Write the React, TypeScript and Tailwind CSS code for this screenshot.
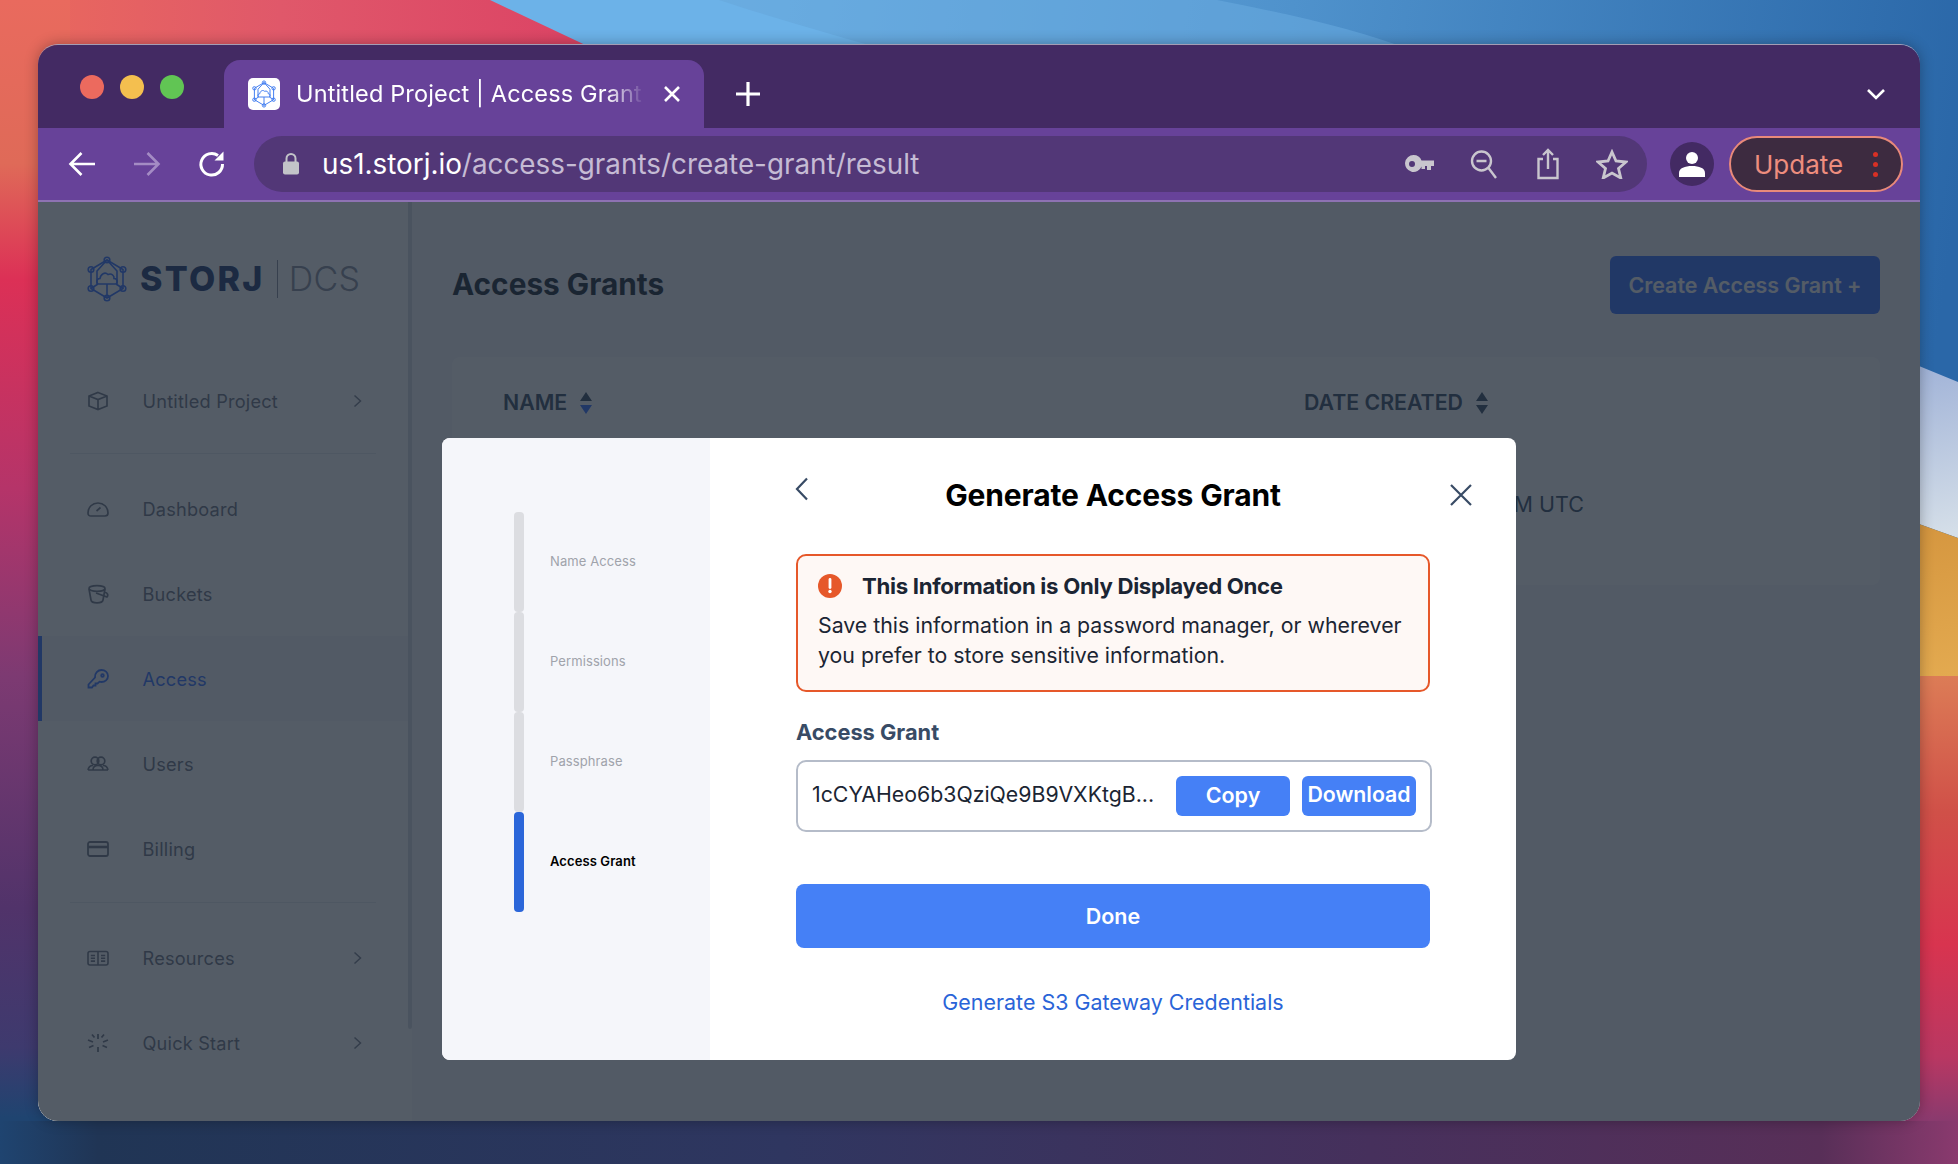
import React from "react";

function Wallpaper() {
  return (
    <svg className="absolute inset-0" width="1958" height="1164" viewBox="0 0 1958 1164">
      <defs>
        <linearGradient id="blue" gradientUnits="userSpaceOnUse" x1="600" y1="0" x2="1958" y2="200">
          <stop offset="0" stopColor="#6FB3E6" />
          <stop offset="0.5" stopColor="#4F92CC" />
          <stop offset="1" stopColor="#2A67A8" />
        </linearGradient>
        <linearGradient id="top" gradientUnits="userSpaceOnUse" x1="0" y1="0" x2="560" y2="0">
          <stop offset="0" stopColor="#EA6A5C" />
          <stop offset="0.5" stopColor="#E0586A" />
          <stop offset="1" stopColor="#DC4565" />
        </linearGradient>
        <linearGradient id="left" gradientUnits="userSpaceOnUse" x1="0" y1="0" x2="0" y2="1164">
          <stop offset="0" stopColor="#E96A5E" />
          <stop offset="0.14" stopColor="#DF6A58" />
          <stop offset="0.24" stopColor="#DC3056" />
          <stop offset="0.42" stopColor="#B53469" />
          <stop offset="0.58" stopColor="#7D3A72" />
          <stop offset="0.78" stopColor="#51336A" />
          <stop offset="0.9" stopColor="#3E3A6E" />
          <stop offset="0.96" stopColor="#1F4470" />
          <stop offset="1" stopColor="#1F4470" />
        </linearGradient>
        <linearGradient id="bottom" gradientUnits="userSpaceOnUse" x1="0" y1="0" x2="1958" y2="0">
          <stop offset="0" stopColor="#1F4470" />
          <stop offset="0.05" stopColor="#203555" />
          <stop offset="0.4" stopColor="#2F3660" />
          <stop offset="0.7" stopColor="#46305C" />
          <stop offset="0.93" stopColor="#582F58" />
          <stop offset="1" stopColor="#8A3A6E" />
        </linearGradient>
        <linearGradient id="white" gradientUnits="userSpaceOnUse" x1="1920" y1="370" x2="1958" y2="530">
          <stop offset="0" stopColor="#A2B4D8" />
          <stop offset="1" stopColor="#D4DEE8" />
        </linearGradient>
        <linearGradient id="orange" gradientUnits="userSpaceOnUse" x1="1920" y1="525" x2="1958" y2="676">
          <stop offset="0" stopColor="#D5963F" />
          <stop offset="1" stopColor="#E3AA50" />
        </linearGradient>
        <linearGradient id="red" gradientUnits="userSpaceOnUse" x1="0" y1="676" x2="0" y2="1164">
          <stop offset="0" stopColor="#DC7C56" />
          <stop offset="0.28" stopColor="#D05048" />
          <stop offset="0.55" stopColor="#D8344F" />
          <stop offset="0.78" stopColor="#B93762" />
          <stop offset="0.91" stopColor="#8A3A6E" />
          <stop offset="1" stopColor="#823A6E" />
        </linearGradient>
      </defs>
      <rect width="1958" height="1164" fill="url(#blue)" />
      <path d="M490 0H1217C1290 14 1360 30 1411 50H590Z" fill="#69ACE0" opacity="0.55" />
      <path d="M490 0H719C780 20 830 34 887 50H590Z" fill="#6CB2E8" />
      <path d="M0 0H490L596 50H0Z" fill="url(#top)" />
      <rect x="0" y="0" width="70" height="1164" fill="url(#left)" />
      <path d="M1880 350L1958 382V538L1880 510Z" fill="url(#white)" />
      <path d="M1880 510L1958 538V676H1880Z" fill="url(#orange)" />
      <rect x="1880" y="676" width="78" height="488" fill="url(#red)" />
      <rect x="0" y="1121" width="1958" height="43" fill="url(#bottom)" />
    </svg>
  );
}

function StorjMark({ className, stroke }: { className?: string; stroke: string }) {
  const nodes = [
    [20, 4],
    [36, 13.5],
    [36, 32.5],
    [20, 42],
    [4, 32.5],
    [4, 13.5],
  ];
  return (
    <svg className={className} viewBox="0 0 40 46" fill="none" stroke={stroke} strokeWidth="1.600">
      <path d="M20 4L36 13.500V32.500L20 42L4 32.500V13.500Z" />
      <path d="M20 4L10 15V29M20 4L30 15V29M4 32.500L11 28M36 32.500L29 28M20 28V42" />
      <path d="M12 28C9 28 9 22.500 13 22.500C13.500 18 18 15.500 21 18.500C24.500 17 27.500 19.500 27 22.500C31 22.500 31 28 28 28Z" />
      {nodes.map(([x, y]) => (
        <circle key={x * 100 + y} cx={x} cy={y} r="2.800" fill="none" />
      ))}
    </svg>
  );
}

const I = "w-[22px] h-[20px] fill-none stroke-[#6F7685] shrink-0";

const icons: Record<string, React.ReactNode> = {
  cube: (
    <svg className={I} viewBox="0 0 22 20" strokeWidth="1.700">
      <path d="M11 1.500L20 5V15L11 18.500L2 15V5ZM2 5L11 8.500L20 5M11 8.500V18.500" />
    </svg>
  ),
  gauge: (
    <svg className={I} viewBox="0 0 22 20" strokeWidth="1.700">
      <path d="M1 14C1 8 5.500 4 11 4C16.500 4 21 8 21 14C21 16 20 17 18 17H4C2 17 1 16 1 14Z" />
      <path d="M9.500 12L13.500 8.500" />
    </svg>
  ),
  bucket: (
    <svg className={I} viewBox="0 0 22 20" strokeWidth="1.700">
      <ellipse cx="10" cy="4.500" rx="8" ry="2.800" />
      <path d="M2 5L4 16C4.300 18 6 18.800 10 18.800C14 18.800 15.700 18 16 16L18 5" />
      <path d="M9 9L20 13C21.500 11.500 20.500 8.500 18 8.500" />
    </svg>
  ),
  key: (
    <svg className="w-[22px] h-[22px] fill-none stroke-[#376FFF] shrink-0" viewBox="0 0 22 22" strokeWidth="1.800">
      <path d="M8 9.500C7.500 5 11 2 14.500 2C18 2 21 4.500 21 8C21 11.500 18 14 14.500 14C13.800 14 13 13.900 12.500 13.700L10.500 15.500H8.500V17.500H6.500L5 19.500H1.500V16.500L8 9.500Z" />
      <circle cx="15.500" cy="7.500" r="1.300" />
    </svg>
  ),
  users: (
    <svg className={I} viewBox="0 0 22 20" strokeWidth="1.700">
      <circle cx="8" cy="7" r="3.800" />
      <circle cx="14" cy="7" r="3.800" />
      <path d="M1 16C1.500 13 4 11.500 6 11.500M21 16C20.500 13 18 11.500 16 11.500M6 16H16C16 13 14 11.500 11 11.500C8 11.500 6 13 6 16ZM1 16H6M16 16H21" />
    </svg>
  ),
  card: (
    <svg className={I} viewBox="0 0 22 20" strokeWidth="1.800">
      <rect x="1" y="3" width="20" height="14" rx="2" />
      <path d="M1 8H21" strokeWidth="2.600" />
    </svg>
  ),
  book: (
    <svg className={I} viewBox="0 0 22 20" strokeWidth="1.600">
      <rect x="1" y="3.500" width="20" height="13.500" rx="2" />
      <path d="M11 3.500V17M3.800 7.500H8M3.800 10.300H8M3.800 13.100H8M14 7.500H18.200M14 10.300H18.200M14 13.100H18.200" />
    </svg>
  ),
  spark: (
    <svg className={I} viewBox="0 0 22 20" strokeWidth="1.800">
      <path d="M11 1V6M11 14V19M1 7L6 9M21 7L16 9M2 14.500L6.500 12.500M20 14.500L15.500 12.500M5 1.500L7.500 4.500M17 1.500L14.500 4.500" />
    </svg>
  ),
};

function Row({ icon, label, chevron, active }: { icon: string; label: string; chevron?: boolean; active?: boolean }) {
  return (
    <div className={"h-[85px] flex items-center pr-[46px] " + (active ? "bg-[#F5F6FA] border-l-4 border-[#376FFF] pl-[45px]" : "pl-[49px]")}>
      <div className="w-[55.500px] shrink-0">{icons[icon]}</div>
      <span className={"flex-1 pt-[2px] text-[18.200px] tracking-[0.2px] " + (active ? "text-[#376FFF]" : "text-[#6F7685]")}>{label}</span>
      {chevron && (
        <svg className="w-[9px] h-[14px] fill-none stroke-[#7C8290]" viewBox="0 0 9 14" strokeWidth="1.500">
          <path d="M1.500 1.500L7.500 7L1.500 12.500" />
        </svg>
      )}
    </div>
  );
}

function SortArrows({ low }: { low?: boolean }) {
  return (
    <svg className="w-[14px] h-[24px]" viewBox="0 0 14 24">
      <path d="M7 1L13 10H1Z" fill="#384B65" />
      <path d="M7 23L13 14H1Z" fill={low ? "#376FFF" : "#384B65"} />
    </svg>
  );
}

function Step({ label, active }: { label: string; active?: boolean }) {
  return (
    <div className="h-[100px] flex items-center">
      <div className={"w-[10px] h-full rounded-[4px] " + (active ? "bg-[#2B66D9]" : "bg-[#DCDDE1]")} />
      <span className={"ml-[26px] text-[13px] tracking-[0.1px] -mt-[1px] " + (active ? "text-black font-semibold" : "text-[#A0A3AB]")}>{label}</span>
    </div>
  );
}

export default function App() {
  return (
    <div className="relative w-[1958px] h-[1164px] overflow-hidden pl-[38px] pt-[44px] font-['Inter',sans-serif]">
      <Wallpaper />
      <div className="relative w-[1882px] h-[1077px] rounded-[20px] overflow-hidden border-t border-[#A49DB4] shadow-[0_0_14px_rgba(0,0,0,0.3)] flex flex-col">
        {/* tab strip */}
        <div className="h-[83px] bg-[#432A63] flex items-end shrink-0">
          <div className="flex gap-[16px] ml-[42px] mb-[29px] w-[144px]">
            <span className="w-[24px] h-[24px] rounded-full bg-[#EC6A5E]" />
            <span className="w-[24px] h-[24px] rounded-full bg-[#F4BF4F]" />
            <span className="w-[24px] h-[24px] rounded-full bg-[#61C554]" />
          </div>
          <div className="h-[68px] w-[480px] rounded-t-[16px] bg-[#674299] flex items-center pl-[24px] shrink-0">
            <div className="w-[32px] h-[32px] rounded-[5px] bg-white flex items-center justify-center shrink-0">
              <StorjMark className="w-[24px] h-[28px]" stroke="#3F7BF0" />
            </div>
            <div className="w-[352px] ml-[16px] text-[23.500px] tracking-[0.15px] text-white whitespace-nowrap [mask-image:linear-gradient(to_right,black_88%,transparent_99%)]">
              Untitled Project | Access Grant
            </div>
            <svg className="w-[18px] h-[18px] ml-[15px] stroke-white fill-none" viewBox="0 0 18 18" strokeWidth="2.600">
              <path d="M2 2L16 16M16 2L2 16" />
            </svg>
          </div>
          <svg className="w-[26px] h-[26px] ml-[31px] mb-[21px] stroke-white fill-none" viewBox="0 0 26 26" strokeWidth="3.200">
            <path d="M13 1V25M1 13H25" />
          </svg>
          <div className="flex-1" />
          <svg className="w-[20px] h-[12px] mr-[34px] mb-[28px] stroke-white fill-none" viewBox="0 0 20 12" strokeWidth="2.600">
            <path d="M2 2L10 10L18 2" />
          </svg>
        </div>
        {/* toolbar */}
        <div className="h-[74px] bg-[#674299] border-b-2 border-[#8E72B3] flex items-start shrink-0 pt-[8px]">
          <div className="flex items-center h-[56px] pl-[30px] gap-[37px] w-[216px]">
            <svg className="w-[28px] h-[26px] stroke-white fill-none shrink-0" viewBox="0 0 28 26" strokeWidth="2.600">
              <path d="M27 13H3M13.500 2L2.500 13L13.500 24" />
            </svg>
            <svg className="w-[28px] h-[26px] stroke-[#A48CC4] fill-none shrink-0" viewBox="0 0 28 26" strokeWidth="2.600">
              <path d="M1 13H25M14.500 2L25.500 13L14.500 24" />
            </svg>
            <svg className="w-[28px] h-[28px] stroke-white fill-none shrink-0" viewBox="0 0 28 28" strokeWidth="3">
              <path d="M24.500 14A10.800 10.800 0 1 1 20 5.500" />
              <path d="M25.500 1.500V10.500H16.500Z" fill="white" stroke="none" />
            </svg>
          </div>
          <div className="w-[1393px] h-[56px] rounded-full bg-[#523777] flex items-center pl-[28px] shrink-0">
            <svg className="w-[18px] h-[24px] shrink-0" viewBox="0 0 18 24">
              <path d="M4.500 10V6.500A4.500 4.500 0 0 1 13.500 6.500V10" fill="none" stroke="#C2C3C8" strokeWidth="2" />
              <rect x="1" y="9.500" width="16" height="13" rx="2" fill="#C2C3C8" />
            </svg>
            <div className="ml-[22px] mt-[2px] w-[1000px] text-[27.850px] whitespace-nowrap text-white">
              us1.storj.io<span className="text-[#C5BBD4]">/access-grants/create-grant/result</span>
            </div>
            <div className="flex items-center ml-[83px]">
              <svg className="w-[30px] h-[20px] shrink-0" viewBox="0 0 30 20" fill="#C9C6CE">
                <path fillRule="evenodd" d="M8.500 1A8.500 8.500 0 0 1 16.500 6.500H29V12H26V16H22V12H20V15H16.500V12.500A8.500 8.500 0 1 1 8.500 1ZM7 7A3 3 0 1 0 7 13A3 3 0 1 0 7 7Z" />
              </svg>
              <svg className="w-[28px] h-[30px] ml-[35px] fill-none stroke-[#C9C6CE] shrink-0" viewBox="0 0 28 30" strokeWidth="2.400">
                <circle cx="11.500" cy="12" r="9.500" />
                <path d="M6.500 12H16.500M18.500 19L26 29" />
              </svg>
              <svg className="w-[24px] h-[32px] ml-[38px] fill-none stroke-[#C9C6CE] shrink-0" viewBox="0 0 24 32" strokeWidth="2.400">
                <path d="M7 11H2.500V30H21.500V11H17M12 21V2M7 7L12 2L17 7" />
              </svg>
              <svg className="w-[32px] h-[30px] ml-[36px] fill-none stroke-[#C9C6CE] shrink-0" viewBox="0 0 32 30" strokeWidth="2.800">
                <path d="M16 3L20 12L30 13L22.500 19.500L24.800 29L16 24L7.200 29L9.500 19.500L2 13L12 12Z" />
              </svg>
            </div>
          </div>
          <div className="w-[44px] h-[44px] rounded-full bg-[#432A63] ml-[23px] mt-[6px] flex items-center justify-center shrink-0">
            <svg className="w-[26px] h-[26px]" viewBox="0 0 26 26" fill="white">
              <circle cx="13" cy="7" r="6" />
              <path d="M0 26V22C0 17 6 15 13 15C20 15 26 17 26 22V26Z" />
            </svg>
          </div>
          <div className="w-[174px] h-[56px] rounded-full bg-[#3D2B40] border-2 border-[#E9897A] ml-[15px] flex items-center pl-[23px] shrink-0">
            <span className="text-[26px] text-[#EE8D7E] w-[119px]">Update</span>
            <span className="flex flex-col gap-[5px]">
              <span className="w-[5px] h-[5px] rounded-full bg-[#D93025]" />
              <span className="w-[5px] h-[5px] rounded-full bg-[#D93025]" />
              <span className="w-[5px] h-[5px] rounded-full bg-[#D93025]" />
            </span>
          </div>
        </div>
        {/* page */}
        <div className="relative flex-1 flex bg-[#F5F6FA] min-h-0">
          <div className="w-[374px] shrink-0 bg-white flex">
            <div className="flex-1 flex flex-col pt-[54px]">
              <div className="flex items-center h-[46px] pl-[49px]">
                <StorjMark className="w-[40px] h-[46px]" stroke="#376FFF" />
                <span className="ml-[13px] text-[34px] font-extrabold tracking-[2.300px] text-[#203870] leading-none">STORJ</span>
                <span className="w-px h-[38px] bg-[#8A90A0] ml-[12px]" />
                <span className="ml-[11px] text-[34px] font-light tracking-[0.3px] text-[#8A90A0] leading-none">DCS</span>
              </div>
              <div className="mt-[56px]">
                <Row icon="cube" label="Untitled Project" chevron />
              </div>
              <div className="h-px bg-[#E8EAEE] mx-[32px] mt-[10px] mb-[12px]" />
              <Row icon="gauge" label="Dashboard" />
              <Row icon="bucket" label="Buckets" />
              <Row icon="key" label="Access" active />
              <Row icon="users" label="Users" />
              <Row icon="card" label="Billing" />
              <div className="h-px bg-[#E8EAEE] mx-[32px] mt-[11px] mb-[12px]" />
              <Row icon="book" label="Resources" chevron />
              <Row icon="spark" label="Quick Start" chevron />
            </div>
            <div className="w-[4px] h-[827px] bg-[#D8DCE2] rounded-b-[2px] shrink-0" />
          </div>
          <div className="flex-1 px-[40px] pt-[54px]">
            <div className="flex items-center justify-between h-[58px]">
              <h1 className="text-[29.800px] font-bold text-[#1B2533] -mt-[2px]">Access Grants</h1>
              <div className="w-[270px] h-[58px] rounded-[6px] bg-[#376FFF] flex items-center justify-center text-[21.400px] font-semibold text-white">
                Create Access Grant +
              </div>
            </div>
            <div className="mt-[43px] h-[228px] rounded-[8px] bg-white pl-[51px] pt-[31px]">
              <div className="flex items-center h-[30px]">
                <div className="w-[801px] flex items-center gap-[12px] text-[21.300px] font-semibold text-[#384B65]">
                  NAME <SortArrows low />
                </div>
                <div className="flex items-center gap-[12px] text-[21.300px] font-semibold text-[#384B65]">
                  DATE CREATED <SortArrows />
                </div>
              </div>
              <div className="flex mt-[71px] h-[30px] items-center">
                <div className="w-[801px]" />
                <div className="w-[280px] text-right text-[21.500px] text-[#384B65] whitespace-nowrap">8/12/2021, 2:31 PM UTC</div>
              </div>
            </div>
          </div>
          {/* dialog layer */}
          <div className="absolute inset-0 bg-[#1B2533]/75 flex justify-center pt-[236px]">
            <div className="w-[1074px] h-[622px] rounded-[8px] bg-white overflow-hidden flex">
              <div className="w-[268px] bg-[#F5F6FA] pl-[72px] pt-[74px] shrink-0">
                <Step label="Name Access" />
                <Step label="Permissions" />
                <Step label="Passphrase" />
                <Step label="Access Grant" active />
              </div>
              <div className="relative flex-1 min-w-0 pl-[86px] pr-[86px] pt-[37px]">
                <svg className="absolute left-[85px] top-[39px] w-[14px] h-[24px] fill-none stroke-[#384B65]" viewBox="0 0 14 24" strokeWidth="2.200">
                  <path d="M12 1.500L2 12L12 22.500" />
                </svg>
                <svg className="absolute left-[740px] top-[46px] w-[22px] h-[22px] fill-none stroke-[#384B65]" viewBox="0 0 22 22" strokeWidth="2.200">
                  <path d="M1 1L21 21M21 1L1 21" />
                </svg>
                <h2 className="text-[30px] leading-[40px] font-bold tracking-[-0.15px] text-black text-center">Generate Access Grant</h2>
                <div className="mt-[39px] h-[138px] rounded-[10px] border-2 border-[#E6582A] bg-[#FEF8F5] pl-[20px] pr-[12px] pt-[15px]">
                  <div className="flex items-center h-[30px]">
                    <svg className="w-[24px] h-[24px] shrink-0" viewBox="0 0 24 24">
                      <circle cx="12" cy="12" r="12" fill="#E6582A" />
                      <path d="M12 5.500V13.500" stroke="white" strokeWidth="2.800" strokeLinecap="round" />
                      <circle cx="12" cy="17.500" r="1.700" fill="white" />
                    </svg>
                    <span className="ml-[20px] text-[22.200px] font-bold text-[#1B2533] tracking-[-0.3px] whitespace-nowrap">This Information is Only Displayed Once</span>
                  </div>
                  <p className="mt-[9px] text-[21.300px] leading-[30px] text-[#1B2533]">
                    Save this information in a password manager, or wherever you prefer to store sensitive information.
                  </p>
                </div>
                <div className="mt-[26px] mb-[14px] text-[21.800px] leading-[28px] font-bold text-[#384B65]">Access Grant</div>
                <div className="w-[636px] h-[72px] rounded-[10px] border-2 border-[#B5BCC9] flex items-center pl-[14px] pr-[14px]">
                  <span className="flex-1 pb-[2px] text-[21.300px] text-[#1B2533] whitespace-nowrap overflow-hidden">1cCYAHeo6b3QziQe9B9VXKtgB...</span>
                  <div className="w-[114px] h-[40px] pb-[2px] rounded-[6px] bg-[#4580F6] text-white text-[21.500px] font-semibold flex items-center justify-center shrink-0">Copy</div>
                  <div className="ml-[12px] w-[114px] h-[40px] pb-[2px] rounded-[6px] bg-[#4580F6] text-white text-[21.300px] font-semibold flex items-center justify-center shrink-0">Download</div>
                </div>
                <div className="mt-[52px] h-[64px] rounded-[8px] bg-[#4580F6] text-white text-[21.500px] font-semibold flex items-center justify-center">Done</div>
                <div className="mt-[40px] text-[21.450px] leading-[28px] text-center text-[#2A64D8]">Generate S3 Gateway Credentials</div>
              </div>
            </div>
          </div>
        </div>
      </div>
    </div>
  );
}
